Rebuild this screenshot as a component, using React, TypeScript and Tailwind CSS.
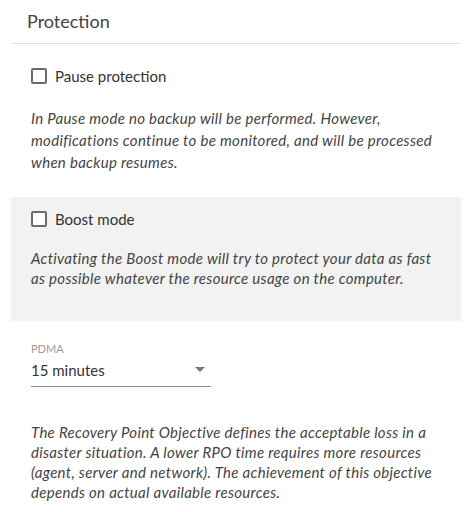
import React from 'react';

function Checkbox({ label }: { label: string }) {
  return (
    <label className="flex h-6 items-center gap-2 text-[15px] text-[#333]">
      <span className="h-4 w-4 rounded-[2px] border-2 border-[#6b6b6b] bg-white" />
      <span>{label}</span>
    </label>
  );
}

export default function App() {
  return (
    <div className="min-h-[512px] w-[472px] bg-white font-['Lato',sans-serif] text-[#333]">
      <div className="mx-[11px] flex h-[44px] items-center border-b border-[#e0e0e0] pl-4">
        <h1 className="text-[18px] text-[#444]">Protection</h1>
      </div>

      <div className="mx-[11px] px-5 pt-[20px]">
        <Checkbox label="Pause protection" />
        <p className="mt-[19px] whitespace-nowrap text-[15px] italic leading-[22px] tracking-[0.3px] text-[#444]">
          In Pause mode no backup will be performed. However,
          <br />
          modifications continue to be monitored, and will be processed
          <br />
          when backup resumes.
        </p>
      </div>

      <div className="mx-[11px] mt-[24px] bg-[#f2f2f2] px-5 pb-[33px] pt-[10px]">
        <Checkbox label="Boost mode" />
        <p className="mt-[17px] whitespace-nowrap text-[15px] italic leading-[20px] tracking-[0.3px] text-[#444]">
          Activating the Boost mode will try to protect your data as fast
          <br />
          as possible whatever the resource usage on the computer.
        </p>
      </div>

      <div className="mx-[11px] px-5">
        <div className="mt-[21px] text-[11px] leading-[14px] text-[#9a9a9a]">PDMA</div>
        <div className="flex h-[31px] w-[180px] items-center justify-between border-b border-[#8a8a8a] pb-[2px]">
          <span className="text-[15px] text-[#333]">15 minutes</span>
          <svg width="10" height="6" viewBox="0 0 10 6" className="mr-[6px]">
            <path d="M0 0 L10 0 L5 5 Z" fill="#777" />
          </svg>
        </div>
        <p className="mt-[35px] whitespace-nowrap text-[15px] italic leading-[20px] tracking-[0.3px] text-[#444]">
          The Recovery Point Objective defines the acceptable loss in a
          <br />
          disaster situation. A lower RPO time requires more resources
          <br />
          (agent, server and network). The achievement of this objective
          <br />
          depends on actual available resources.
        </p>
      </div>
    </div>
  );
}
